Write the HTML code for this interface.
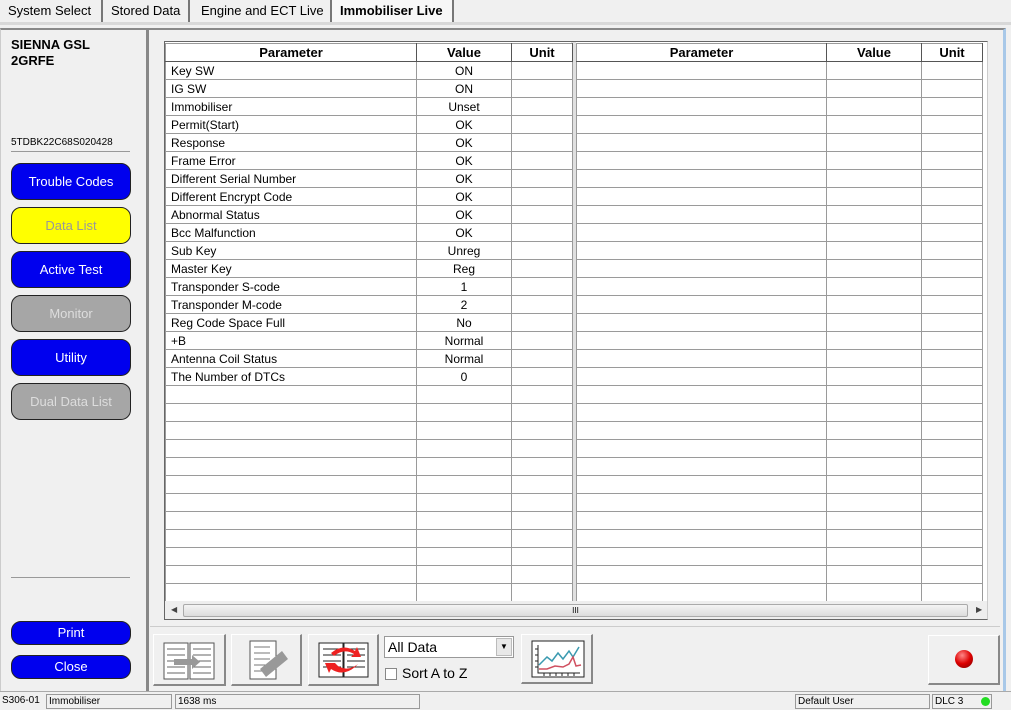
<!DOCTYPE html><html><head><style>
*{margin:0;padding:0;box-sizing:border-box}
body{width:1011px;height:710px;background:#f0f0f0;font-family:"Liberation Sans",sans-serif;font-size:12px;position:relative;overflow:hidden;color:#000}
.a{position:absolute}
.tab{position:absolute;top:0;height:22px;font-size:13px;line-height:21px;padding-left:8px;border-right:2px solid #777}
table{border-collapse:collapse;table-layout:fixed;position:absolute;background:#fff}
td,th{border:1px solid #9a9a9a;height:18px;padding:0 5px;font-size:12px;white-space:nowrap;overflow:hidden;line-height:16px}
th{font-weight:bold;font-size:13px;border-bottom:1px solid #555;border-right:1px solid #555;text-align:center;background:#fff}
td:nth-child(2){text-align:center}
.btn{position:absolute;left:11px;width:120px;height:37px;border-radius:10px;border:1px solid #222;color:#fff;font-size:13px;text-align:center;line-height:35px}
.bl{background:#0000ee}.ye{background:#ffff00;color:#999}.gr{background:#a6a6a6;color:#ddd}
.tb{position:absolute;background:#f0f0f0;border:1px solid #fff;border-right:2px solid #888;border-bottom:2px solid #888}
.st{position:absolute;top:694px;height:15px;border:1px solid #999;font-size:10px;line-height:13px;padding-left:2px}
</style></head><body>
<div class="a" style="left:0;top:22px;width:1011px;height:3px;background:#d8d8d8"></div>
<div class="tab" style="left:0;width:103px">System Select</div>
<div class="tab" style="left:103px;width:87px">Stored Data</div>
<div class="tab" style="left:190px;width:142px;padding-left:11px">Engine and ECT Live</div>
<div class="tab" style="left:332px;width:122px;font-weight:bold;background:#f7f7f7">Immobiliser Live</div>
<div class="a" style="left:0;top:28px;width:146px;height:663px;border-top:2px solid #888;border-left:1px solid #ccc"></div>
<div class="a" style="left:146px;top:28px;width:3px;height:663px;background:#888"></div>
<div class="a" style="left:149px;top:28px;width:857px;height:663px;border-top:2px solid #888;border-right:3px solid #a8c8e8"></div>
<div class="a" style="left:11px;top:37px;font-weight:bold;font-size:13px;line-height:16px">SIENNA GSL<br>2GRFE</div>
<div class="a" style="left:11px;top:137px;font-size:10px">5TDBK22C68S020428</div>
<div class="a" style="left:11px;top:151px;width:119px;height:1px;background:#999"></div>
<div class="btn bl" style="top:163px">Trouble Codes</div>
<div class="btn ye" style="top:207px">Data List</div>
<div class="btn bl" style="top:251px">Active Test</div>
<div class="btn gr" style="top:295px">Monitor</div>
<div class="btn bl" style="top:339px">Utility</div>
<div class="btn gr" style="top:383px">Dual Data List</div>
<div class="a" style="left:11px;top:577px;width:119px;height:1px;background:#999"></div>
<div class="btn bl" style="top:621px;height:24px;line-height:22px">Print</div>
<div class="btn bl" style="top:655px;height:24px;line-height:22px">Close</div>
<div class="a" style="left:164px;top:41px;width:824px;height:579px;background:#fff;border:1px solid #666;border-right-color:#ccc"></div>
<div class="a" style="left:571px;top:42px;width:5px;height:559px;background:#e0e0e0"></div>
<table style="left:165px;top:43px;width:407px"><colgroup><col style="width:251px"><col style="width:95px"><col style="width:61px"></colgroup>
<tr><th>Parameter</th><th>Value</th><th>Unit</th></tr>
<tr><td>Key SW</td><td>ON</td><td></td></tr>
<tr><td>IG SW</td><td>ON</td><td></td></tr>
<tr><td>Immobiliser</td><td>Unset</td><td></td></tr>
<tr><td>Permit(Start)</td><td>OK</td><td></td></tr>
<tr><td>Response</td><td>OK</td><td></td></tr>
<tr><td>Frame Error</td><td>OK</td><td></td></tr>
<tr><td>Different Serial Number</td><td>OK</td><td></td></tr>
<tr><td>Different Encrypt Code</td><td>OK</td><td></td></tr>
<tr><td>Abnormal Status</td><td>OK</td><td></td></tr>
<tr><td>Bcc Malfunction</td><td>OK</td><td></td></tr>
<tr><td>Sub Key</td><td>Unreg</td><td></td></tr>
<tr><td>Master Key</td><td>Reg</td><td></td></tr>
<tr><td>Transponder S-code</td><td>1</td><td></td></tr>
<tr><td>Transponder M-code</td><td>2</td><td></td></tr>
<tr><td>Reg Code Space Full</td><td>No</td><td></td></tr>
<tr><td>+B</td><td>Normal</td><td></td></tr>
<tr><td>Antenna Coil Status</td><td>Normal</td><td></td></tr>
<tr><td>The Number of DTCs</td><td>0</td><td></td></tr>
<tr><td></td><td></td><td></td></tr><tr><td></td><td></td><td></td></tr><tr><td></td><td></td><td></td></tr><tr><td></td><td></td><td></td></tr><tr><td></td><td></td><td></td></tr><tr><td></td><td></td><td></td></tr><tr><td></td><td></td><td></td></tr><tr><td></td><td></td><td></td></tr><tr><td></td><td></td><td></td></tr><tr><td></td><td></td><td></td></tr><tr><td></td><td></td><td></td></tr><tr><td></td><td></td><td></td></tr>
</table>
<table style="left:576px;top:43px;width:406px"><colgroup><col style="width:250px"><col style="width:95px"><col style="width:61px"></colgroup>
<tr><th>Parameter</th><th>Value</th><th>Unit</th></tr>
<tr><td></td><td></td><td></td></tr><tr><td></td><td></td><td></td></tr><tr><td></td><td></td><td></td></tr><tr><td></td><td></td><td></td></tr><tr><td></td><td></td><td></td></tr><tr><td></td><td></td><td></td></tr><tr><td></td><td></td><td></td></tr><tr><td></td><td></td><td></td></tr><tr><td></td><td></td><td></td></tr><tr><td></td><td></td><td></td></tr>
<tr><td></td><td></td><td></td></tr><tr><td></td><td></td><td></td></tr><tr><td></td><td></td><td></td></tr><tr><td></td><td></td><td></td></tr><tr><td></td><td></td><td></td></tr><tr><td></td><td></td><td></td></tr><tr><td></td><td></td><td></td></tr><tr><td></td><td></td><td></td></tr><tr><td></td><td></td><td></td></tr><tr><td></td><td></td><td></td></tr>
<tr><td></td><td></td><td></td></tr><tr><td></td><td></td><td></td></tr><tr><td></td><td></td><td></td></tr><tr><td></td><td></td><td></td></tr><tr><td></td><td></td><td></td></tr><tr><td></td><td></td><td></td></tr><tr><td></td><td></td><td></td></tr><tr><td></td><td></td><td></td></tr><tr><td></td><td></td><td></td></tr><tr><td></td><td></td><td></td></tr>
</table>
<div class="a" style="left:165px;top:601px;width:822px;height:18px;background:#eee"></div>
<div class="a" style="left:183px;top:604px;width:785px;height:13px;background:linear-gradient(#f4f4f4,#dcdcdc);border:1px solid #aaa;border-radius:2px;font-size:8px;text-align:center;line-height:11px">III</div>
<div class="a" style="left:171px;top:605px;font-size:8px;color:#444">◀</div>
<div class="a" style="left:976px;top:605px;font-size:8px;color:#444">▶</div>
<div class="a" style="left:150px;top:626px;width:850px;height:1px;background:#ccc"></div>
<div class="tb" style="left:153px;top:634px;width:73px;height:52px"><svg width="70" height="48"><g fill="#fff" stroke="#555"><rect x="10" y="8" width="24" height="36"/><rect x="36" y="8" width="24" height="36"/></g><g stroke="#666"><path d="M13 14h18M13 20h18M13 26h18M13 32h18M13 38h18M39 14h18M39 20h18M39 26h18M39 32h18M39 38h18"/></g><path d="M20 24h18v-4l8 7-8 7v-4H20z" fill="#999"/></svg></div>
<div class="tb" style="left:231px;top:634px;width:71px;height:52px"><svg width="68" height="48"><rect x="18" y="6" width="26" height="38" fill="#fff" stroke="#555"/><path d="M22 12h16M22 18h16M22 24h16M22 30h16M22 36h16" stroke="#777"/><path d="M28 34l22-18 6 8-22 18z" fill="#999"/></svg></div>
<div class="tb" style="left:308px;top:634px;width:71px;height:52px"><svg width="68" height="48"><g fill="#fff" stroke="#222"><rect x="10" y="8" width="24" height="34"/><rect x="35" y="8" width="24" height="34"/></g><path d="M14 14h18M14 20h18M14 26h18M14 32h18M38 14h18M38 20h18M38 26h18M38 32h18" stroke="#222"/><path d="M22 18q12-10 24-2l2-4 4 10-10 0 3-3q-10-6-20 2zM46 32q-12 10-24 2l-2 4-4-10 10 0 3 3q10 6 20-2z" fill="#e22"/></svg></div>
<div class="a" style="left:384px;top:636px;width:130px;height:22px;background:#fff;border:1px solid #999;font-size:14px;line-height:20px;padding-left:3px">All Data<div class="a" style="right:1px;top:1px;width:16px;height:18px;background:#e8e8e8;border:1px solid #bbb;font-size:8px;text-align:center;line-height:16px">▼</div></div>
<div class="a" style="left:385px;top:668px;width:12px;height:12px;background:#fff;border:1px solid #888"></div>
<div class="a" style="left:402px;top:665px;font-size:14px">Sort A to Z</div>
<div class="tb" style="left:521px;top:634px;width:72px;height:50px"><svg width="70" height="46"><rect x="10" y="6" width="52" height="36" fill="#fff" stroke="#222"/><path d="M16 10v28h42M16 14h-3M16 20h-3M16 26h-3M16 32h-3M22 38v3M28 38v3M34 38v3M40 38v3M46 38v3M52 38v3" stroke="#222" fill="none"/><path d="M17 30l8-8 5 4 6-8 5 6 6-8 4 6 6-10" stroke="#3a9ab0" fill="none" stroke-width="1.5"/><path d="M17 34h8l8-3 8 1 6-3 4-7 3 9 5-1" stroke="#d05060" fill="none" stroke-width="1.5"/></svg></div>
<div class="tb" style="left:928px;top:635px;width:72px;height:50px"><div class="a" style="left:26px;top:14px;width:18px;height:18px;border-radius:50%;background:radial-gradient(circle at 40% 30%,#f88,#d00 50%,#700)"></div></div>
<div class="a" style="left:0;top:691px;width:1011px;height:1px;background:#aaa"></div>
<div class="st" style="left:0;width:45px;border:none">S306-01</div>
<div class="st" style="left:46px;width:126px">Immobiliser</div>
<div class="st" style="left:175px;width:245px">1638 ms</div>
<div class="st" style="left:795px;width:135px">Default User</div>
<div class="st" style="left:932px;width:60px">DLC 3</div>
<div class="a" style="left:981px;top:697px;width:9px;height:9px;border-radius:50%;background:#2d2"></div>
</body></html>
